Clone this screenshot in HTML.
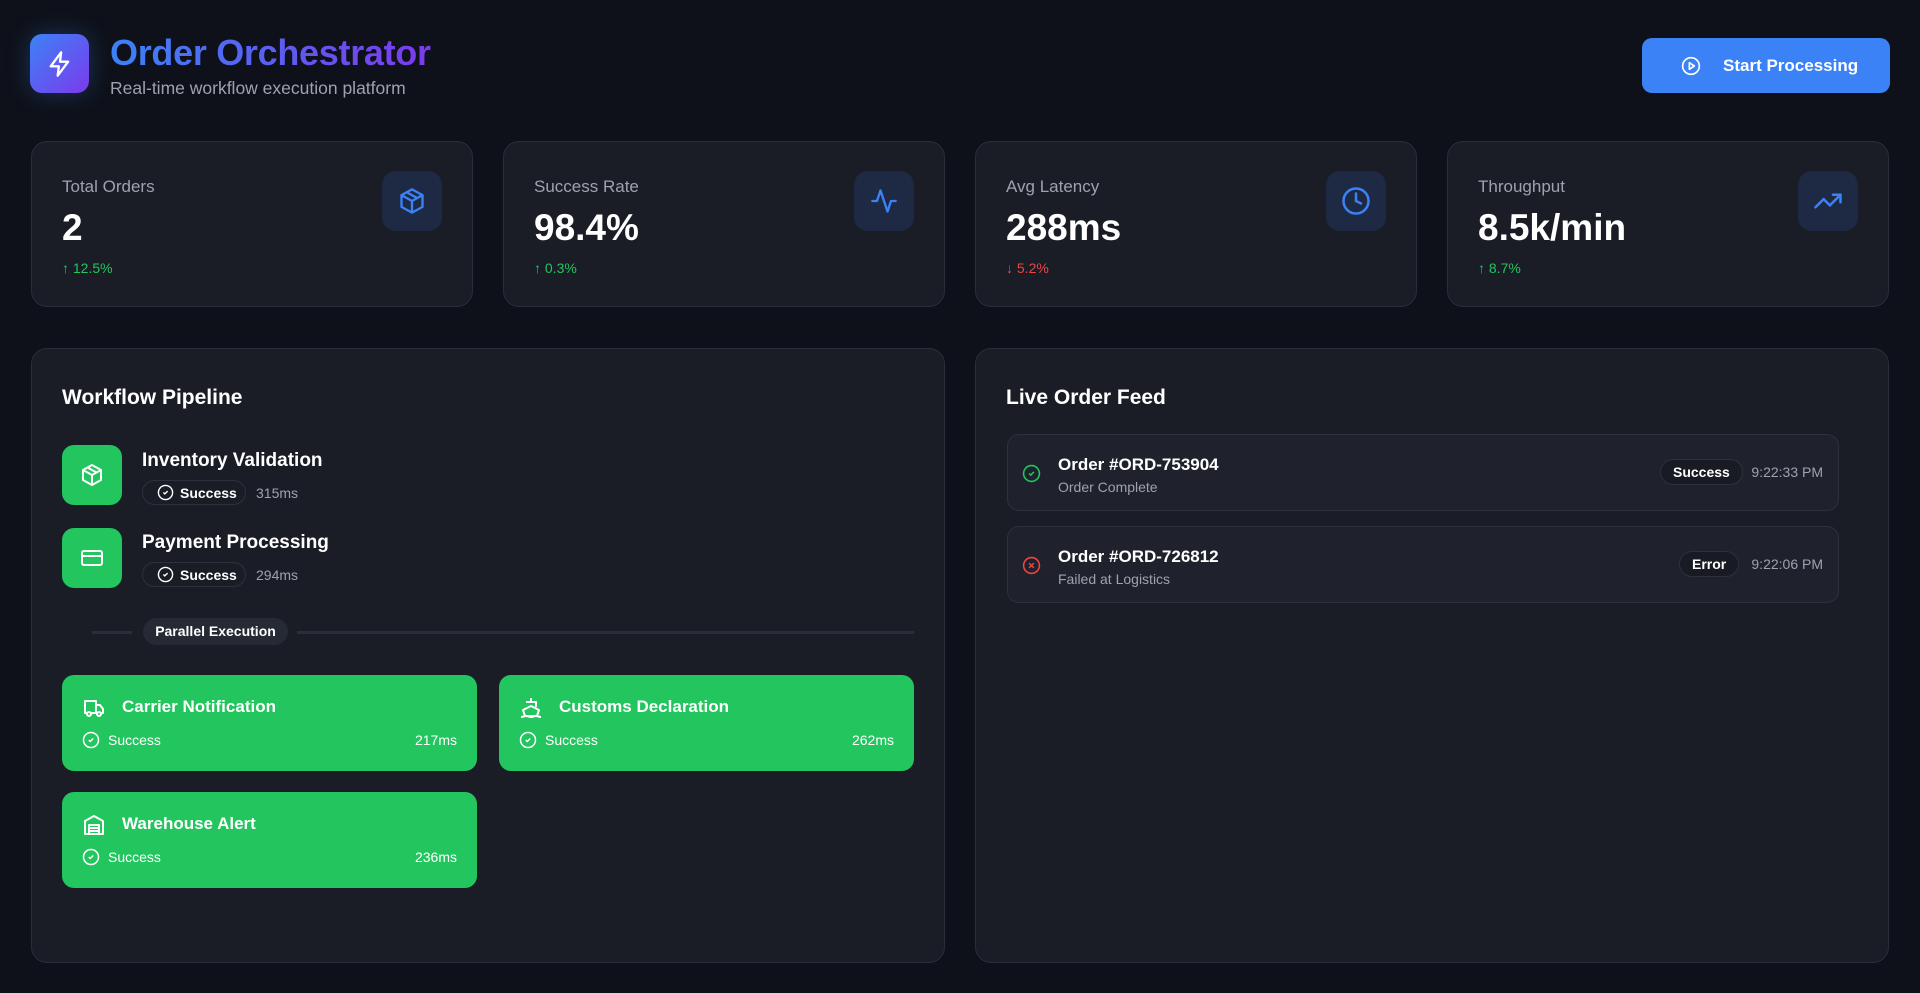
<!DOCTYPE html>
<html><head><meta charset="utf-8"><style>
*{box-sizing:border-box;margin:0;padding:0}
body{width:1920px;height:993px;background:#0e1119;font-family:"Liberation Sans",sans-serif;color:#fff;position:relative;overflow:hidden}
.a{position:absolute}
.logo{left:30px;top:34px;width:59px;height:59px;border-radius:12px;background:linear-gradient(135deg,#3b82f6,#7c3aed);box-shadow:0 0 24px rgba(59,130,246,.3);display:flex;align-items:center;justify-content:center}
.title{left:110px;top:32px;font-size:36px;font-weight:bold;background:linear-gradient(90deg,#3b82f6,#7c3aed);-webkit-background-clip:text;color:transparent;letter-spacing:-0.3px}
.sub{left:110px;top:78px;font-size:17.5px;color:#9ca3af}
.btn{left:1642px;top:38px;width:248px;height:55px;border-radius:10px;background:#3b82f6;display:flex;align-items:center;font-size:17px;font-weight:bold;white-space:nowrap}
.card{background:#1a1d26;border:1px solid #2a2e39;border-radius:16px}
.stat{top:141px;width:442px;height:166px}
.stat .l{position:absolute;left:30px;top:35px;font-size:17px;color:#9ca3af}
.stat .v{position:absolute;left:30px;top:65px;font-size:37px;font-weight:bold}
.stat .c{position:absolute;left:30px;top:118px;font-size:14px;color:#22c55e}
.stat .ib{position:absolute;right:30px;top:29px;width:60px;height:60px;border-radius:14px;background:#1e2a44;display:flex;align-items:center;justify-content:center}
.panel{top:348px;width:914px;height:615px}
.h{position:absolute;left:30px;top:37px;font-size:21px;font-weight:bold}
.step{position:absolute;left:30px;width:60px;height:60px;border-radius:12px;background:#22c55e;display:flex;align-items:center;justify-content:center}
.st{position:absolute;left:110px;font-size:19px;font-weight:bold}
.pill{position:absolute;left:110px;height:25px;width:104px;border:1px solid #2d313c;border-radius:13px;display:flex;align-items:center;padding-left:14px;font-size:14px;font-weight:bold;gap:6px}
.ms{position:absolute;left:224px;font-size:14px;color:#9ca3af}
.g{position:absolute;width:415px;height:96px;border-radius:12px;background:#22c55e}
.g .t{position:absolute;left:60px;top:22px;font-size:17px;font-weight:bold}
.g .gi{position:absolute;left:20px;top:21px}
.g .s{position:absolute;left:20px;top:56px;font-size:14px;display:flex;align-items:center;gap:8px}
.g .m{position:absolute;right:20px;top:57px;font-size:14px}
.feed{position:absolute;left:31px;width:832px;height:77px;background:#1f222c;border:1px solid #2d313c;border-radius:12px}
.feed .o{position:absolute;left:50px;top:20px;font-size:17px;font-weight:bold}
.feed .d{position:absolute;left:50px;top:44px;font-size:14px;color:#9ca3af}
.feed .fi{position:absolute;left:14px;top:29px}
.feed .b{position:absolute;top:24px;height:26px;border:1px solid #2d313c;border-radius:13px;font-size:14px;font-weight:bold;padding:0 12px;line-height:24px;background:#181b23}
.feed .tm{position:absolute;right:15px;top:29px;font-size:14px;color:#9ca3af}
</style></head><body>
<div class="a logo"><svg width="28" height="28" viewBox="0 0 24 24" fill="none" stroke="#fff" stroke-width="2" stroke-linejoin="round"><path d="M13 2 4 14h7l-1 8 9-12h-7z"/></svg></div>
<div class="a title">Order Orchestrator</div>
<div class="a sub">Real-time workflow execution platform</div>
<div class="a btn"><svg style="margin-left:39px" width="20" height="20" viewBox="0 0 24 24" fill="none" stroke="#fff" stroke-width="2"><circle cx="12" cy="12" r="10"/><path d="M10 8l6 4-6 4z" stroke-linejoin="round"/></svg><span style="margin-left:22px">Start Processing</span></div>

<div class="a card stat" style="left:31px"><div class="l">Total Orders</div><div class="v">2</div><div class="c">↑ 12.5%</div><div class="ib"><svg width="28" height="28" viewBox="0 0 24 24" fill="none" stroke="#3b82f6" stroke-width="2" stroke-linejoin="round"><path d="M12 2 3 7v10l9 5 9-5V7z"/><path d="M3 7l9 5 9-5M12 12v10M7.5 4.5l9 5"/></svg></div></div>
<div class="a card stat" style="left:503px"><div class="l">Success Rate</div><div class="v">98.4%</div><div class="c">↑ 0.3%</div><div class="ib"><svg width="28" height="28" viewBox="0 0 24 24" fill="none" stroke="#3b82f6" stroke-width="2" stroke-linejoin="round" stroke-linecap="round"><path d="M22 12h-4l-3 9L9 3l-3 9H2"/></svg></div></div>
<div class="a card stat" style="left:975px"><div class="l">Avg Latency</div><div class="v">288ms</div><div class="c" style="color:#ef4444">↓ 5.2%</div><div class="ib"><svg width="30" height="30" viewBox="0 0 24 24" fill="none" stroke="#3b82f6" stroke-width="2" stroke-linecap="round"><circle cx="12" cy="12" r="10"/><path d="M12 6v6l4 2"/></svg></div></div>
<div class="a card stat" style="left:1447px"><div class="l">Throughput</div><div class="v">8.5k/min</div><div class="c">↑ 8.7%</div><div class="ib"><svg width="30" height="30" viewBox="0 0 24 24" fill="none" stroke="#3b82f6" stroke-width="2" stroke-linecap="round" stroke-linejoin="round"><path d="M22 7l-8.5 8.5-5-5L2 17"/><path d="M16 7h6v6"/></svg></div></div>

<div class="a card panel" style="left:31px">
<div class="h">Workflow Pipeline</div>
<div class="step" style="top:96px"><svg width="24" height="24" viewBox="0 0 24 24" fill="none" stroke="#fff" stroke-width="2" stroke-linejoin="round"><path d="M12 2 3 7v10l9 5 9-5V7z"/><path d="M3 7l9 5 9-5M12 12v10M7.5 4.5l9 5"/></svg></div>
<div class="st" style="top:101px">Inventory Validation</div>
<div class="pill" style="top:131px"><svg width="17" height="17" viewBox="0 0 24 24" fill="none" stroke="#fff" stroke-width="2"><circle cx="12" cy="12" r="10"/><path d="M9 12l2 2 4-4"/></svg>Success</div>
<div class="ms" style="top:136px">315ms</div>
<div class="step" style="top:179px"><svg width="24" height="24" viewBox="0 0 24 24" fill="none" stroke="#fff" stroke-width="2"><rect x="2" y="5" width="20" height="14" rx="2"/><path d="M2 10h20"/></svg></div>
<div class="st" style="top:183px">Payment Processing</div>
<div class="pill" style="top:213px"><svg width="17" height="17" viewBox="0 0 24 24" fill="none" stroke="#fff" stroke-width="2"><circle cx="12" cy="12" r="10"/><path d="M9 12l2 2 4-4"/></svg>Success</div>
<div class="ms" style="top:218px">294ms</div>
<div class="a" style="left:60px;top:282px;width:40px;height:3px;background:#2a2e39"></div>
<div class="a" style="left:111px;top:269px;width:145px;height:27px;border-radius:14px;background:#262a35;font-size:14px;font-weight:bold;text-align:center;line-height:27px">Parallel Execution</div>
<div class="a" style="left:265px;top:282px;width:617px;height:3px;background:#2a2e39"></div>
<div class="g" style="left:30px;top:326px"><svg class="gi" width="24" height="24" viewBox="0 0 24 24" fill="none" stroke="#fff" stroke-width="2" stroke-linejoin="round"><path d="M3 5h11v12H3zM14 9h4l3 4v4h-7"/><circle cx="7" cy="18" r="2" fill="#22c55e"/><circle cx="17" cy="18" r="2" fill="#22c55e"/></svg><div class="t">Carrier Notification</div><div class="s"><svg width="18" height="18" viewBox="0 0 24 24" fill="none" stroke="#fff" stroke-width="2"><circle cx="12" cy="12" r="10"/><path d="M9 12l2 2 4-4"/></svg>Success</div><div class="m">217ms</div></div>
<div class="g" style="left:467px;top:326px"><svg class="gi" width="24" height="24" viewBox="0 0 24 24" fill="none" stroke="#fff" stroke-width="2" stroke-linejoin="round"><path d="M12 2v4M7 6h10v5M4 14l8-4 8 4-2 6H6z"/><path d="M2 21c2 0 3-1 5-1s3 1 5 1 3-1 5-1 3 1 5 1"/></svg><div class="t">Customs Declaration</div><div class="s"><svg width="18" height="18" viewBox="0 0 24 24" fill="none" stroke="#fff" stroke-width="2"><circle cx="12" cy="12" r="10"/><path d="M9 12l2 2 4-4"/></svg>Success</div><div class="m">262ms</div></div>
<div class="g" style="left:30px;top:443px"><svg class="gi" width="24" height="24" viewBox="0 0 24 24" fill="none" stroke="#fff" stroke-width="2" stroke-linejoin="round"><path d="M3 21V8l9-5 9 5v13z"/><path d="M7 21v-9h10v9M7 15h10M7 18h10"/></svg><div class="t">Warehouse Alert</div><div class="s"><svg width="18" height="18" viewBox="0 0 24 24" fill="none" stroke="#fff" stroke-width="2"><circle cx="12" cy="12" r="10"/><path d="M9 12l2 2 4-4"/></svg>Success</div><div class="m">236ms</div></div>
</div>

<div class="a card panel" style="left:975px">
<div class="h">Live Order Feed</div>
<div class="feed" style="top:85px"><svg class="fi" width="19" height="19" viewBox="0 0 24 24" fill="none" stroke="#22c55e" stroke-width="2"><circle cx="12" cy="12" r="10"/><path d="M9 12l2 2 4-4"/></svg><div class="o">Order #ORD-753904</div><div class="d">Order Complete</div><div class="b" style="left:652px">Success</div><div class="tm">9:22:33 PM</div></div>
<div class="feed" style="top:177px"><svg class="fi" width="19" height="19" viewBox="0 0 24 24" fill="none" stroke="#ef4444" stroke-width="2"><circle cx="12" cy="12" r="10"/><path d="M15 9l-6 6M9 9l6 6"/></svg><div class="o">Order #ORD-726812</div><div class="d">Failed at Logistics</div><div class="b" style="left:671px">Error</div><div class="tm">9:22:06 PM</div></div>
</div>
</body></html>
